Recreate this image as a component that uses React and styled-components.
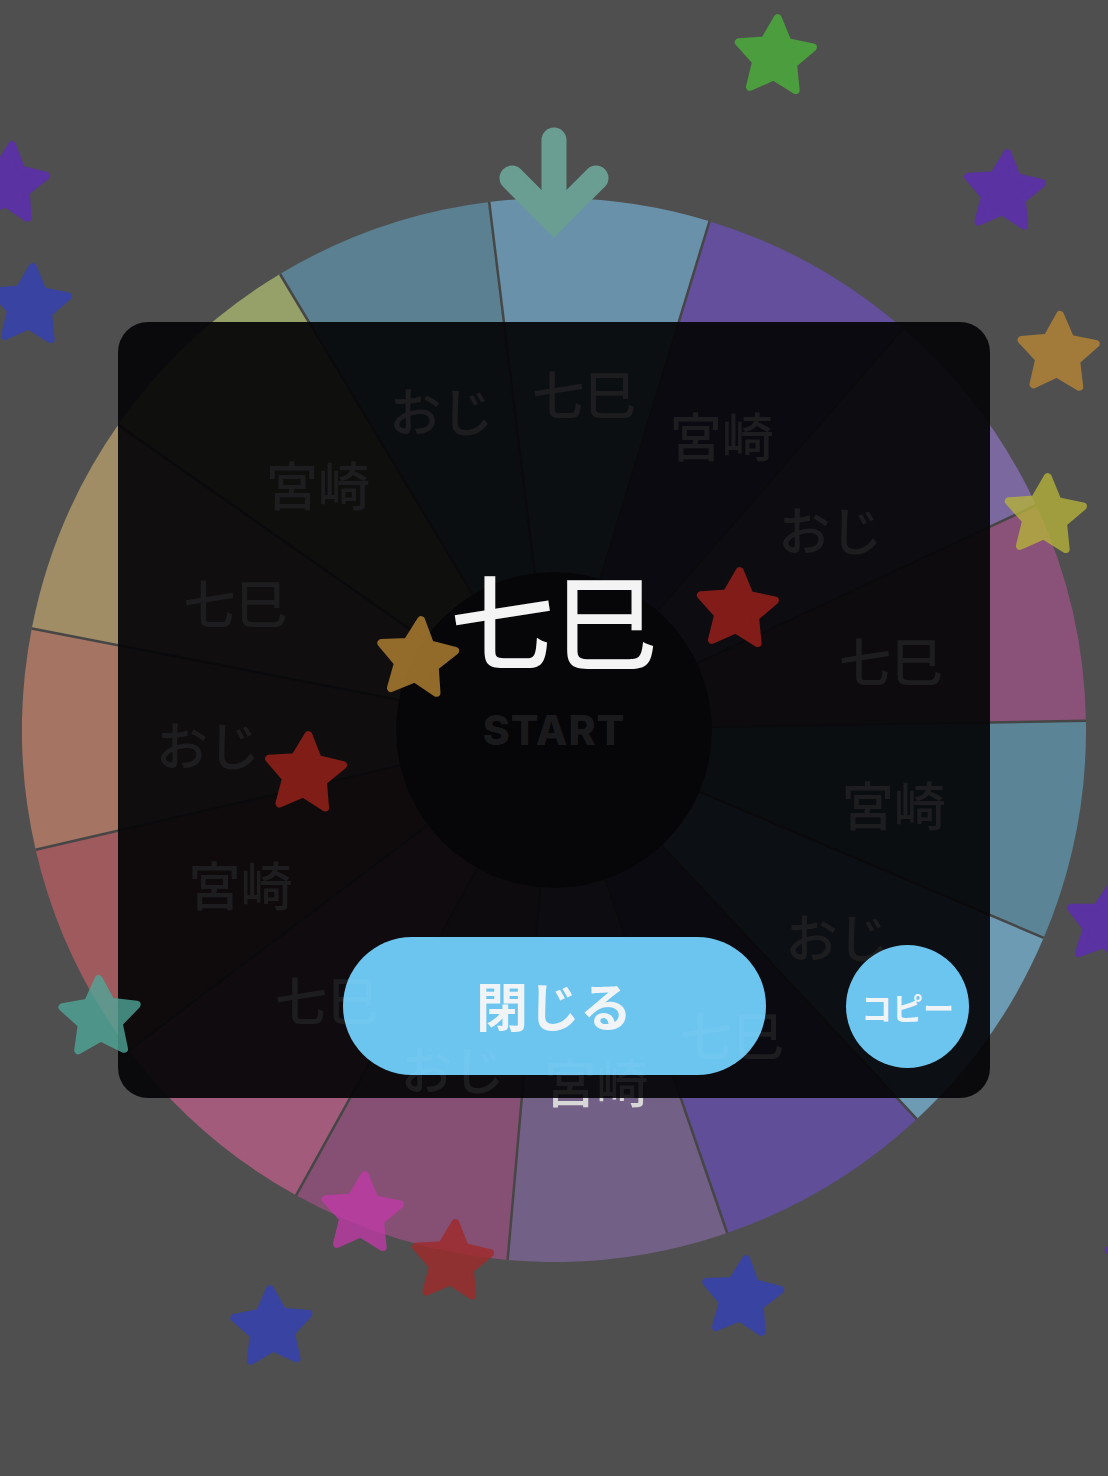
import styled, { createGlobalStyle } from 'styled-components'

const GlobalStyle = createGlobalStyle`
  html, body { margin: 0; padding: 0; background: #4f4f4f; }
  body { font-family: "Noto Sans CJK JP", "Noto Sans", sans-serif; }
`

const WHEEL = 1064
const R = WHEEL / 2
const OFFSET = -7 // first boundary, degrees clockwise from the top
const names = ['七巳', '宮崎', 'おじ']
const colors = [
  '#6991a9', '#634f9b', '#7b689e', '#8b5279', '#5b8496',
  '#6c9bb3', '#614e99', '#736086', '#855073', '#a25b7b',
  '#9f5a5e', '#a57462', '#a08d66', '#96a16a', '#5a8091'
]

const stars = [
  { x: 775, y: 57, rot: 4, color: '#4ba83c' },
  { x: 1004, y: 192, rot: 5, color: '#5c2fae' },
  { x: 1058, y: 354, rot: 3, color: '#ae8138' },
  { x: 1045, y: 516, rot: 4, color: '#b6b43a', alpha: 0.78 },
  { x: 8, y: 184, rot: 6, color: '#5c2fae' },
  { x: 30, y: 306, rot: 4, color: '#3643ae' },
  { x: 417, y: 659, rot: 6, color: '#a6782f' },
  { x: 737, y: 610, rot: 4, color: '#921f1b' },
  { x: 305, y: 774, rot: 5, color: '#902018' },
  { x: 100, y: 1018, rot: -2, color: '#4fa89a', alpha: 0.78 },
  { x: 1106, y: 925, rot: 8, color: '#5c2fae' },
  { x: 362, y: 1214, rot: 4, color: '#c03aa8', alpha: 0.78 },
  { x: 452, y: 1262, rot: 5, color: '#a02a2a', alpha: 0.8 },
  { x: 272, y: 1328, rot: -3, color: '#3643ae' },
  { x: 742, y: 1298, rot: 6, color: '#3643ae' },
  { x: 1146, y: 1262, rot: 0, color: '#5c2fae' }
]

const polar = (deg, r) => {
  const a = (deg * Math.PI) / 180
  return [r * Math.sin(a), -r * Math.cos(a)]
}

const slicePath = (a0, a1) => {
  const [x0, y0] = polar(a0, R)
  const [x1, y1] = polar(a1, R)
  return `M0 0 L${x0.toFixed(2)} ${y0.toFixed(2)} A${R} ${R} 0 0 1 ${x1.toFixed(2)} ${y1.toFixed(2)} Z`
}

const starPoints = (r, ratio = 0.5) =>
  Array.from({ length: 10 }, (_, i) => {
    const rad = i % 2 ? r * ratio : r
    const a = (Math.PI / 5) * i - Math.PI / 2
    return `${(rad * Math.cos(a)).toFixed(1)},${(rad * Math.sin(a)).toFixed(1)}`
  }).join(' ')

const slices = colors.map((color, k) => {
  const a0 = OFFSET + 24 * k
  const [lx, ly] = polar(a0 + 12, 346)
  return { color, a0, lx, ly: ly + 7, name: names[k % 3] }
})

const Screen = styled.div`
  position: relative;
  width: 1108px;
  height: 1476px;
  overflow: hidden;
  box-sizing: border-box;
  padding-top: 198px;
  display: flex;
  justify-content: center;
  align-items: flex-start;
`

const Wheel = styled.svg`
  display: block;
  width: ${WHEEL}px;
  height: ${WHEEL}px;
  flex: none;
`

const LabelGhost = styled.svg`
  position: absolute;
  top: 198px;
  left: 22px;
  width: ${WHEEL}px;
  height: ${WHEEL}px;
  pointer-events: none;
`

const SliceLabel = styled.text`
  font-family: "Noto Sans CJK JP", sans-serif;
  font-size: 52px;
  font-weight: 500;
  fill: ${p => p.$fill};
`

const StartLabel = styled.text`
  font-family: Inter, "Liberation Sans", sans-serif;
  font-size: 41px;
  font-weight: 800;
  letter-spacing: 1px;
  fill: ${p => p.$fill};
`

const Pointer = styled.svg`
  position: absolute;
  top: 120px;
  left: 490px;
  width: 128px;
  height: 130px;
`

const Modal = styled.div`
  position: absolute;
  top: 322px;
  left: 118px;
  width: 872px;
  height: 776px;
  border-radius: 30px;
  background: rgba(6, 6, 9, 0.94);
  box-sizing: border-box;
  padding: 244px 0 23px;
  display: flex;
  flex-direction: column;
  align-items: center;
`

const Result = styled.div`
  font-size: 104px;
  line-height: 1;
  font-weight: 500;
  color: #f4f4f4;
  text-align: center;
`

const Actions = styled.div`
  margin-top: auto;
  width: 100%;
  display: grid;
  grid-template-columns: 1fr auto 1fr;
  align-items: center;
`

const CloseButton = styled.button`
  grid-column: 2;
  width: 423px;
  height: 138px;
  border: none;
  border-radius: 69px;
  background: #6bc5ef;
  color: #f1f4f7;
  font-family: inherit;
  font-size: 52px;
  font-weight: 700;
  padding: 0 0 4px;
`

const CopyButton = styled.button`
  grid-column: 3;
  justify-self: end;
  margin-right: 21px;
  width: 123px;
  height: 123px;
  border: none;
  border-radius: 50%;
  background: #6bc5ef;
  color: #f1f4f7;
  font-family: inherit;
  font-size: 31px;
  font-weight: 700;
  padding: 0;
`

const Star = styled.svg`
  position: absolute;
  left: ${p => p.$x - 50}px;
  top: ${p => p.$y - 50}px;
  width: 100px;
  height: 100px;
  opacity: ${p => p.$alpha ?? 0.88};
  pointer-events: none;
`

function Labels({ fill }) {
  return <>
    {slices.map(s => (
      <SliceLabel key={s.a0} $fill={fill} x={s.lx} y={s.ly}
        textAnchor='middle' dominantBaseline='central'>{s.name}</SliceLabel>
    ))}
    <StartLabel $fill={fill} x='0' y='0' textAnchor='middle' dominantBaseline='central'>START</StartLabel>
  </>
}

export default function App() {
  return <>
    <GlobalStyle />
    <Screen>
      <Wheel viewBox={`${-R} ${-R} ${WHEEL} ${WHEEL}`}>
        {slices.map(s => <path key={s.a0} d={slicePath(s.a0, s.a0 + 24)} fill={s.color} />)}
        {slices.map(s => {
          const [x, y] = polar(s.a0, R)
          return <line key={s.a0} x1='0' y1='0' x2={x} y2={y} stroke='#464646' strokeWidth='2.5' />
        })}
        <circle r='158' fill='#0a0a0a' />
        <Labels fill='#d6d6d6' />
      </Wheel>

      <Pointer viewBox='490 120 128 130'>
        <g fill='none' stroke='#6a9e92' strokeWidth='25' strokeLinecap='round'>
          <line x1='554' y1='140' x2='554' y2='216' />
          <polyline points='512,178 554,220 596,178' strokeLinejoin='miter' />
        </g>
      </Pointer>

      <Modal>
        <Result>七巳</Result>
        <Actions>
          <CloseButton>閉じる</CloseButton>
          <CopyButton>コピー</CopyButton>
        </Actions>
      </Modal>

      <LabelGhost viewBox={`${-R} ${-R} ${WHEEL} ${WHEEL}`}>
        <Labels fill='rgba(255,255,255,0.045)' />
      </LabelGhost>

      {stars.map((s, i) => (
        <Star key={i} $x={s.x} $y={s.y} $alpha={s.alpha} viewBox='-50 -50 100 100'>
          <polygon points={starPoints(39)} transform={`rotate(${s.rot})`}
            fill={s.color} stroke={s.color} strokeWidth='8' strokeLinejoin='round' />
        </Star>
      ))}
    </Screen>
  </>
}
